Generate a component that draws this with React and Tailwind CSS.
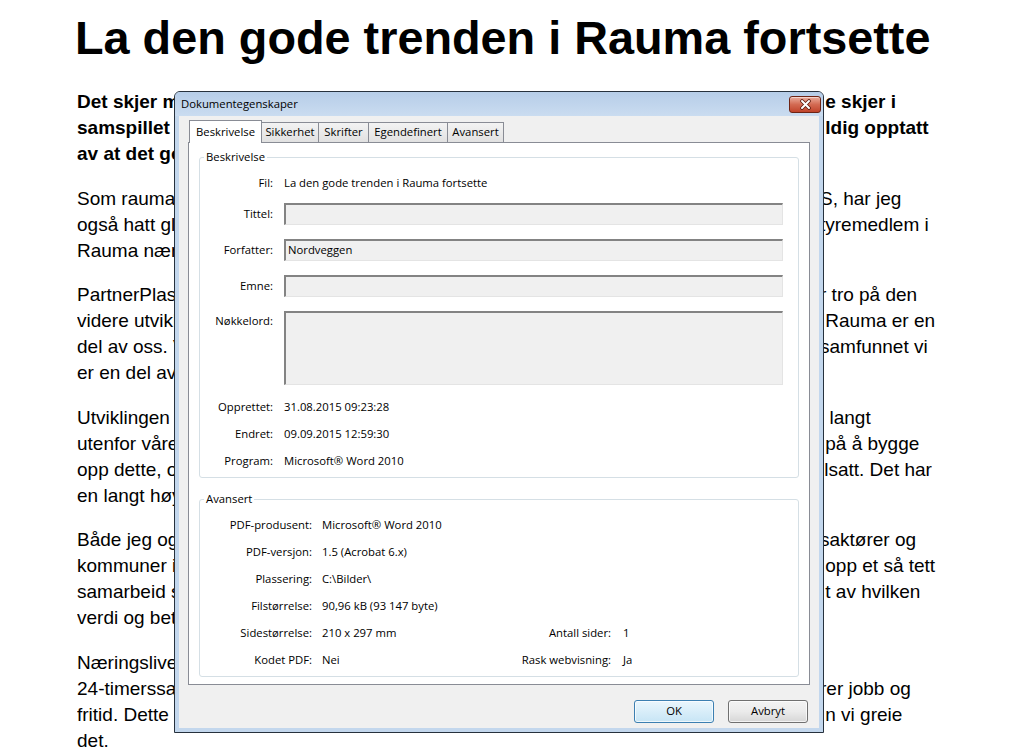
import React from "react";

// Only the bits of the article that stick out on each side of the dialog are shown.
const paras = [
  {
    bold: true,
    lines: [
      ["Det skjer mye", " e skjer i"],
      ["samspillet mellom", " ldig opptatt"],
      ["av at det gode", ""],
    ],
  },
  {
    lines: [
      ["Som raumaværing", "S, har jeg"],
      ["også hatt gleden", "tyremedlem i"],
      ["Rauma næringsforening", ""],
    ],
  },
  {
    lines: [
      ["PartnerPlast", "r tro på den"],
      ["videre utvikling", " Rauma er en"],
      ["del av oss. Vi", "samfunnet vi"],
      ["er en del av.", ""],
    ],
  },
  {
    lines: [
      ["Utviklingen i", "l langt"],
      ["utenfor våre", " på å bygge"],
      ["opp dette, og", "llsatt. Det har"],
      ["en langt høyere", ""],
    ],
  },
  {
    lines: [
      ["Både jeg og", "saktører og"],
      ["kommuner i", " opp et så tett"],
      ["samarbeid som", " t av hvilken"],
      ["verdi og betydning", ""],
    ],
  },
  {
    lines: [
      ["Næringslivet", ""],
      ["24-timerssamfunnet", "rer jobb og"],
      ["fritid. Dette er", " n vi greie"],
      ["det.", ""],
    ],
  },
];

function Page() {
  return (
    <div className="px-[77px] pt-[10px] font-['Liberation_Sans',Arial,sans-serif] text-black">
      <h1 className="-ml-[2px] whitespace-nowrap text-[46.8px] font-bold leading-[56px]">
        La den gode trenden i Rauma fortsette
      </h1>
      <div className="mt-[23px]">
        {paras.map((p, i) => (
          <div
            key={i}
            className={
              p.bold
                ? "mb-[18.6px] text-[19px] font-bold leading-[26px]"
                : "mb-[18.6px] text-[19px] leading-[26px]"
            }
          >
            {p.lines.map(([left, right], j) => (
              <div key={j} className="flex h-[26px] whitespace-pre">
                <span className="w-[97px] shrink-0 overflow-hidden">{left}</span>
                <span className="ml-[646px]">{right}</span>
              </div>
            ))}
          </div>
        ))}
      </div>
    </div>
  );
}

function CloseButton() {
  return (
    <div className="flex h-[17px] w-[32px] items-center justify-center rounded-[3px] border border-[#6e2414] bg-linear-to-b from-[#e9ab9b] via-[#d36a52] to-[#c0432a] shadow-[inset_0_1px_0_rgba(255,255,255,0.5)]">
      <svg width="13" height="11" viewBox="0 0 13 11">
        <path d="M3 2 L10 9 M10 2 L3 9" stroke="#5a1c10" strokeWidth="3.6" strokeLinecap="round" />
        <path d="M3 2 L10 9 M10 2 L3 9" stroke="#ffffff" strokeWidth="2" strokeLinecap="round" />
      </svg>
    </div>
  );
}

function Field({ label, children }) {
  return (
    <div className="flex h-[20px] items-center">
      <span className="w-[73px] shrink-0 text-right">{label}</span>
      <span className="ml-[11px]">{children}</span>
    </div>
  );
}

function Input({ label, value, className, tall }) {
  return (
    <div className={tall ? "flex items-start" : "flex items-center"}>
      <span className={tall ? "w-[73px] shrink-0 pt-[2px] text-right" : "w-[73px] shrink-0 text-right"}>
        {label}
      </span>
      <div
        className={
          "ml-[11px] flex w-[499px] items-center border-t-2 border-l-2 border-r border-b border-t-[#838383] border-l-[#838383] border-r-[#e4e4e4] border-b-[#e4e4e4] bg-[#f0f0f0] pl-[2px] " +
          className
        }
      >
        {value}
      </div>
    </div>
  );
}

function Info({ label, value, right, rightValue }) {
  return (
    <div className="flex h-[20px] items-center">
      <span className="w-[112px] shrink-0 text-right">{label}</span>
      <span className="ml-[10px] w-[160px] shrink-0">{value}</span>
      {right && (
        <>
          <span className="w-[129px] shrink-0 text-right">{right}</span>
          <span className="ml-[12px]">{rightValue}</span>
        </>
      )}
    </div>
  );
}

function Tabs() {
  const inactive = [
    ["Sikkerhet", "w-[57px]"],
    ["Skrifter", "w-[50px]"],
    ["Egendefinert", "w-[79px]"],
    ["Avansert", "w-[56px]"],
  ];
  return (
    <div className="flex h-[22px] items-end pl-[1px]">
      <div className="relative z-10 -mb-px flex h-[23px] w-[73px] items-center justify-center border border-b-0 border-[#898c95] bg-white">
        Beskrivelse
      </div>
      {inactive.map(([t, w]) => (
        <div
          key={t}
          className={
            "flex h-[20px] items-center justify-center border-t border-r border-[#898c95] bg-linear-to-b from-[#f3f3f3] to-[#e1e1e1] " +
            w
          }
        >
          {t}
        </div>
      ))}
    </div>
  );
}

function Dialog() {
  return (
    <div className="absolute left-[174px] top-[91px] flex h-[642px] w-[650px] flex-col rounded-t-[6px] border border-[#26313d] bg-[#c3d7ed] font-['Open_Sans',sans-serif] text-[11.3px] text-black">
      <div className="flex h-[24px] items-center rounded-t-[5px] bg-linear-to-b from-[#b6cde8] to-[#cadcf0] pl-[6px] pr-[2px]">
        <span className="flex-1">Dokumentegenskaper</span>
        <CloseButton />
      </div>
      <div className="mx-[4px] mb-[4px] flex flex-1 flex-col bg-[#f0f0f0] px-[9px] pb-[5px] pt-[4px]">
        <Tabs />
        <div className="flex-1 border border-[#898c95] bg-white px-[10px] pt-[6px]">
          <fieldset className="rounded-[3px] border border-[#d5dfe5] pb-[6px]">
            <legend className="ml-[4px] px-[2px] leading-[16px]">Beskrivelse</legend>
            <div className="mt-[8px]">
              <Field label="Fil:">La den gode trenden i Rauma fortsette</Field>
            </div>
            <div className="mt-[10px]">
              <Input label="Tittel:" value="" className="h-[22px]" />
            </div>
            <div className="mt-[14px]">
              <Input label="Forfatter:" value="Nordveggen" className="h-[22px]" />
            </div>
            <div className="mt-[14px]">
              <Input label="Emne:" value="" className="h-[22px]" />
            </div>
            <div className="mt-[14px]">
              <Input label="Nøkkelord:" value="" className="h-[74px]" tall />
            </div>
            <div className="mt-[12px] flex flex-col gap-[7px]">
              <Field label="Opprettet:">31.08.2015 09:23:28</Field>
              <Field label="Endret:">09.09.2015 12:59:30</Field>
              <Field label="Program:">Microsoft® Word 2010</Field>
            </div>
          </fieldset>
          <fieldset className="mt-[13px] rounded-[3px] border border-[#d5dfe5] pb-[6px]">
            <legend className="ml-[4px] px-[2px] leading-[16px]">Avansert</legend>
            <div className="mt-[8px] flex flex-col gap-[7px]">
              <Info label="PDF-produsent:" value="Microsoft® Word 2010" />
              <Info label="PDF-versjon:" value="1.5 (Acrobat 6.x)" />
              <Info label="Plassering:" value="C:\Bilder\" />
              <Info label="Filstørrelse:" value="90,96 kB (93 147 byte)" />
              <Info label="Sidestørrelse:" value="210 x 297 mm" right="Antall sider:" rightValue="1" />
              <Info label="Kodet PDF:" value="Nei" right="Rask webvisning:" rightValue="Ja" />
            </div>
          </fieldset>
        </div>
        <div className="mt-[15px] flex justify-end gap-[14px] pr-[2px]">
          <button className="h-[23px] w-[80px] rounded-[3px] border border-[#3c7fb1] bg-linear-to-b from-[#eaf6fd] to-[#c7e5f5] shadow-[inset_0_0_0_1px_rgba(255,255,255,0.7)]">
            OK
          </button>
          <button className="h-[23px] w-[80px] rounded-[3px] border border-[#707070] bg-linear-to-b from-[#f3f3f3] via-[#ebebeb] to-[#d6d6d6] shadow-[inset_0_0_0_1px_rgba(255,255,255,0.7)]">
            Avbryt
          </button>
        </div>
      </div>
    </div>
  );
}

export default function App() {
  return (
    <div className="relative h-[750px] w-[1016px] overflow-hidden bg-white">
      <Page />
      <Dialog />
    </div>
  );
}
